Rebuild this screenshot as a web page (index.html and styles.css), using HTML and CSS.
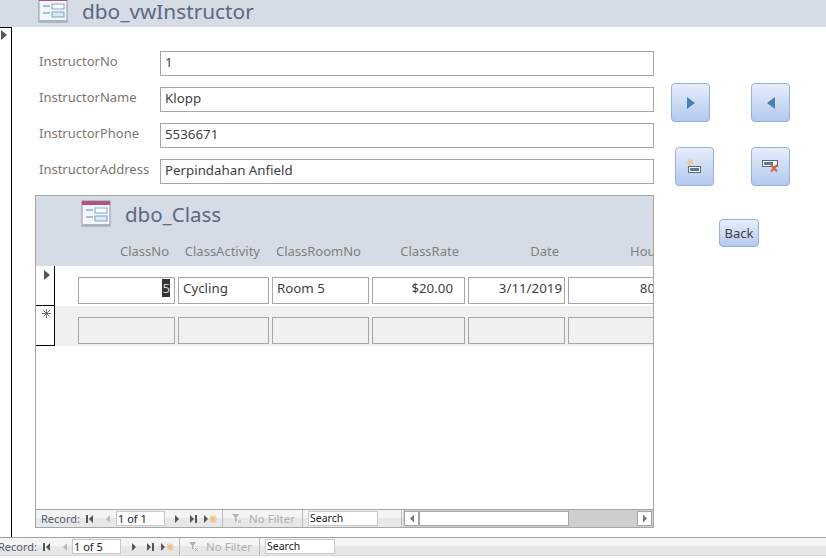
FILE: index.html
```html
<!DOCTYPE html>
<html lang="en">
<head>
    <meta charset="UTF-8">
    <title>dbo_vwInstructor</title>
    <link rel="stylesheet" href="styles.css">
</head>
<body>
    <svg class="defs" width="0" height="0">
        <symbol id="form-top" viewBox="0 0 32 28">
            <rect x="2" y="1" width="28" height="25" fill="#f4f6fa" stroke="#8d97a8"/>
            <rect x="2" y="1" width="28" height="4" fill="#b0557a"/>
            <rect x="3" y="24" width="27" height="2" fill="#a9b3c1"/>
            <rect x="6" y="9" width="7" height="2" fill="#9fc0e0"/>
            <rect x="6" y="16" width="7" height="2" fill="#9fc0e0"/>
            <rect x="15" y="8" width="12" height="5" fill="#fff" stroke="#7fa6cc"/>
            <rect x="15" y="16" width="12" height="5" fill="#dbe8f5" stroke="#7fa6cc"/>
        </symbol>
        <symbol id="nav-first" viewBox="0 0 7 8"><path d="M0 0h2v8H0zM7 0v8L3 4z"/></symbol>
        <symbol id="nav-prev" viewBox="0 0 6 8"><path d="M5 0v8L1 4z"/></symbol>
        <symbol id="nav-next" viewBox="0 0 6 8"><path d="M1 0v8l4-4z"/></symbol>
        <symbol id="nav-last" viewBox="0 0 7 8"><path d="M0 0v8l4-4zM5 0h2v8H5z"/></symbol>
        <symbol id="nav-new" viewBox="0 0 13 8">
            <path d="M0 0v8l4-4z" fill="#555"/>
            <path d="M9 0v8M5 4h8M6 1l6 6M12 1L6 7" stroke="#eebf7e" stroke-width="1.100"/>
        </symbol>
        <symbol id="nav-filter" viewBox="0 0 10 11">
            <path d="M0 1h7L4.500 4.500V9L3 8V4.500z" fill="#b4b4b4"/>
            <path d="M6 7l3 3M9 7l-3 3" stroke="#b4b4b4"/>
        </symbol>
    </svg>

    <header class="title-bar">
        <svg class="form-icon title-icon"><use href="#form-top"/></svg>
        <h1 class="form-title">dbo_vwInstructor</h1>
    </header>

    <div class="main">
        <div class="selector"><span class="arrow"></span></div>

        <div class="form-area">
            <div class="form-left">
                <div class="field-row">
                    <label class="field-label">InstructorNo</label>
                    <div class="field-box">1</div>
                </div>
                <div class="field-row">
                    <label class="field-label">InstructorName</label>
                    <div class="field-box">Klopp</div>
                </div>
                <div class="field-row">
                    <label class="field-label">InstructorPhone</label>
                    <div class="field-box">5536671</div>
                </div>
                <div class="field-row">
                    <label class="field-label">InstructorAddress</label>
                    <div class="field-box">Perpindahan Anfield</div>
                </div>

                <section class="subform">
                    <div class="sub-head">
                        <div class="sub-title">
                            <svg class="form-icon sub-icon"><use href="#form-top"/></svg>
                            <h2 class="sub-name">dbo_Class</h2>
                        </div>
                        <div class="grid-row head-row">
                            <span class="col-a">ClassNo</span>
                            <span class="col-b">ClassActivity</span>
                            <span class="col-c">ClassRoomNo</span>
                            <span class="col-d">ClassRate</span>
                            <span class="col-e">Date</span>
                            <span class="col-f">Hours</span>
                        </div>
                    </div>
                    <div class="sub-records">
                        <div class="record">
                            <div class="rec-sel"><span class="arrow"></span></div>
                            <div class="grid-row cell-row">
                                <div class="cell col-a num"><span class="picked">5</span></div>
                                <div class="cell col-b">Cycling</div>
                                <div class="cell col-c">Room 5</div>
                                <div class="cell col-d num">$20.00</div>
                                <div class="cell col-e num">3/11/2019</div>
                                <div class="cell col-f num">80</div>
                            </div>
                        </div>
                        <div class="record record-new">
                            <div class="rec-sel rec-star">
                                <svg class="star" viewBox="0 0 9 9"><path d="M4.500 0v9M0 4.500h9M1.300 1.300l6.400 6.400M7.700 1.300L1.300 7.700" stroke="#555" stroke-width="0.800"/></svg>
                            </div>
                            <div class="grid-row cell-row">
                                <div class="cell col-a"></div>
                                <div class="cell col-b"></div>
                                <div class="cell col-c"></div>
                                <div class="cell col-d"></div>
                                <div class="cell col-e"></div>
                                <div class="cell col-f"></div>
                            </div>
                        </div>
                    </div>
                    <div class="sub-nav">
                        <div class="nav nav-sub">
                            <span class="nav-label">Record:</span>
                            <svg class="nav-icon i-first"><use href="#nav-first"/></svg>
                            <svg class="nav-icon i-prev"><use href="#nav-prev"/></svg>
                            <span class="nav-input nav-pos">1 of 1</span>
                            <svg class="nav-icon i-next"><use href="#nav-next"/></svg>
                            <svg class="nav-icon i-last"><use href="#nav-last"/></svg>
                            <svg class="nav-icon i-new"><use href="#nav-new"/></svg>
                            <span class="nav-div"></span>
                            <svg class="nav-icon i-filter"><use href="#nav-filter"/></svg>
                            <span class="nav-filter">No Filter</span>
                            <span class="nav-div"></span>
                            <span class="nav-input nav-search">Search</span>
                            <span class="nav-div nav-div-end"></span>
                        </div>
                        <div class="scrollbar">
                            <span class="sb-btn"><svg class="sb-icon"><use href="#nav-prev"/></svg></span>
                            <span class="sb-thumb"></span>
                            <span class="sb-btn"><svg class="sb-icon"><use href="#nav-next"/></svg></span>
                        </div>
                    </div>
                </section>
            </div>

            <div class="buttons">
                <div class="btn-row row-one">
                    <button class="btn btn-icon">
                        <svg width="12" height="14" viewBox="0 0 12 14"><path d="M2 1v12l8-6z" fill="#4a7eb5"/></svg>
                    </button>
                    <button class="btn btn-icon">
                        <svg width="12" height="14" viewBox="0 0 12 14"><path d="M10 1v12L2 7z" fill="#4a7eb5"/></svg>
                    </button>
                </div>
                <div class="btn-row row-two">
                    <button class="btn btn-icon">
                        <svg width="16" height="16" viewBox="0 0 16 16">
                            <path d="M3 0v7M0 3.500h7M1 1l4.500 5M5.500 1L1 6" stroke="#eebf7e"/>
                            <rect x="1.500" y="7.500" width="12" height="6" fill="#fff" stroke="#666"/>
                            <rect x="3" y="9" width="9" height="3" fill="#4a7eb5"/>
                        </svg>
                    </button>
                    <button class="btn btn-icon">
                        <svg width="17" height="13" viewBox="0 0 17 13">
                            <rect x="0.500" y="0.500" width="15" height="6" fill="#fff" stroke="#666"/>
                            <rect x="2" y="2" width="9" height="3" fill="#4a7eb5"/>
                            <path d="M9 5l6 6.500M15 5l-6 6.500" stroke="#dc5f3f" stroke-width="2"/>
                        </svg>
                    </button>
                </div>
                <div class="btn-row row-three">
                    <button class="btn btn-text">Back</button>
                </div>
            </div>
        </div>
    </div>

    <footer class="nav nav-main">
        <span class="nav-label">Record:</span>
        <svg class="nav-icon i-first"><use href="#nav-first"/></svg>
        <svg class="nav-icon i-prev"><use href="#nav-prev"/></svg>
        <span class="nav-input nav-pos">1 of 5</span>
        <svg class="nav-icon i-next"><use href="#nav-next"/></svg>
        <svg class="nav-icon i-last"><use href="#nav-last"/></svg>
        <svg class="nav-icon i-new"><use href="#nav-new"/></svg>
        <span class="nav-div"></span>
        <svg class="nav-icon i-filter"><use href="#nav-filter"/></svg>
        <span class="nav-filter">No Filter</span>
        <span class="nav-div"></span>
        <span class="nav-input nav-search">Search</span>
    </footer>
</body>
</html>
```

FILE: styles.css
```css
* {
    box-sizing: border-box;
}
html, body {
    height: 558px;
    overflow: hidden;
}
body {
    margin: 0;
    background-color: #fff;
    font-family: "Noto Sans", Arial, sans-serif;
    font-size: 13px;
    color: #3f3f3f;
}
.defs {
    display: block;
    height: 0;
}

/* title */
.title-bar {
    height: 27px;
    background-color: #d5dce6;
    display: flex;
    align-items: flex-end;
    overflow: hidden;
}
.form-icon {
    display: block;
    flex: none;
}
.title-icon {
    width: 32px;
    height: 28px;
    margin: 0 0 3px 37px;
}
.form-title {
    margin: 0 0 4px 13px;
    font-size: 20.8px;
    line-height: 23px;
    font-weight: normal;
    color: #5a6a80;
}

/* main form */
.main {
    height: 510px;
    display: flex;
}
.selector {
    width: 12px;
    flex: none;
    border-right: 1px solid #000;
    border-top: 1px solid #000;
    padding: 2px 0 0 1px;
}
.arrow {
    display: block;
    width: 0;
    height: 0;
    border-left: 6px solid #555;
    border-top: 5.5px solid transparent;
    border-bottom: 5.5px solid transparent;
}
.form-area {
    flex: 1;
    display: flex;
}
.form-left {
    width: 642px;
    flex: none;
    padding: 24px 0 0 23px;
}
.field-row {
    display: flex;
    height: 25px;
    margin: 0 0 11px 4px;
}
.field-label {
    width: 121px;
    flex: none;
    color: #80756f;
    line-height: 21px;
}
.field-box {
    flex: 1;
    border: 1px solid #a6a6a6;
    padding: 0 4px;
    font-size: 13.3px;
    line-height: 21px;
}

/* subform */
.subform {
    width: 619px;
    height: 333px;
    border: 1px solid #a6a6a6;
    display: flex;
    flex-direction: column;
    overflow: hidden;
}
.sub-head {
    height: 70px;
    flex: none;
    background-color: #d5dce6;
}
.sub-title {
    height: 45px;
    display: flex;
    padding: 4px 0 0 44px;
}
.sub-icon {
    width: 32px;
    height: 28px;
}
.sub-name {
    margin: 0 0 0 13px;
    font-size: 20.5px;
    line-height: 28px;
    font-weight: normal;
    color: #5a6a80;
}
.grid-row {
    display: grid;
    grid-template-columns: 97px 91px 97px 93px 97px 92px;
    column-gap: 3px;
}
.head-row {
    padding-left: 42px;
    color: #80807f;
    line-height: 20px;
    white-space: nowrap;
}
.head-row span {
    text-align: right;
    padding-right: 6px;
}
.head-row .col-b {
    padding-right: 9px;
}
.head-row .col-c {
    padding-right: 8px;
}
.head-row .col-f {
    text-align: left;
    padding: 0 0 0 62px;
}
.sub-records {
    flex: 1;
}
.record {
    height: 40px;
    display: flex;
}
.record-new {
    background-color: #f0f0f0;
}
.rec-sel {
    width: 19px;
    flex: none;
    background-color: #fff;
    border-right: 1px solid #000;
    border-bottom: 1px solid #000;
    padding: 4px 0 0 8px;
}
.rec-star {
    padding: 3px 0 0 6px;
}
.star {
    display: block;
    width: 9px;
    height: 9px;
}
.record .cell-row {
    padding: 11px 0 0 23px;
}
.cell {
    height: 27px;
    border: 1px solid #a6a6a6;
    padding: 0 4px;
    font-size: 13.3px;
    line-height: 21px;
}
.num {
    text-align: right;
}
.cell.col-d {
    padding-right: 11px;
}
.cell.col-e {
    padding-right: 2px;
}
.picked {
    background-color: #333;
    color: #cfcfcf;
}

/* record navigation */
.sub-nav {
    height: 18px;
    flex: none;
    display: flex;
    border-top: 1px solid #a6a6a6;
}
.nav {
    display: flex;
    align-items: center;
    font-size: 11px;
    background: linear-gradient(#f3f4f6 50%, #e6e7ea 50%);
}
.nav-sub {
    width: 367px;
    flex: none;
    padding-left: 5px;
}
.nav-main {
    height: 19px;
    border-top: 1px solid #a0a0a0;
    border-bottom: 1px solid #d8d8d8;
    margin-bottom: 2px;
    padding-left: 0;
    overflow: hidden;
}
.nav-main .nav-label {
    margin-left: -2px;
}
.nav-label {
    width: 39px;
    flex: none;
    color: #555e6b;
    white-space: nowrap;
}
.nav-icon {
    display: block;
    height: 8px;
    flex: none;
    fill: #555;
}
.i-first {
    width: 7px;
    margin-left: 6px;
}
.i-prev {
    width: 6px;
    margin-left: 12px;
    fill: #bbb;
}
.nav-input {
    height: 15px;
    flex: none;
    background-color: #fff;
    border: 1px solid #c8c8c8;
    padding-left: 1px;
    line-height: 13px;
    color: #222;
}
.nav-pos {
    width: 49px;
    margin-left: 5px;
}
.nav-main .nav-pos {
    margin-left: 4px;
}
.i-next {
    width: 6px;
    margin-left: 9px;
}
.nav-main .i-next {
    margin-left: 10px;
}
.i-last {
    width: 7px;
    margin-left: 10px;
}
.i-new {
    width: 13px;
    margin-left: 7px;
}
.nav-div {
    width: 1px;
    height: 100%;
    flex: none;
    background-color: #bdbdbd;
    margin-left: 5px;
}
.i-filter {
    width: 10px;
    height: 11px;
    margin-left: 9px;
}
.nav-filter {
    width: 44px;
    flex: none;
    margin-left: 7px;
    font-size: 11.5px;
    color: #b0b0b0;
    white-space: nowrap;
}
.nav-filter + .nav-div {
    margin-left: 9px;
}
.nav-search {
    width: 70px;
    margin-left: 5px;
    font-size: 10.5px;
}
.nav-div-end {
    margin-left: 23px;
}

.scrollbar {
    flex: 1;
    display: flex;
    background-color: #cfcfcf;
    padding: 1px;
    justify-content: flex-start;
}
.sb-btn {
    width: 15px;
    flex: none;
    background-color: #fff;
    border: 1px solid #a6a6a6;
    display: flex;
    align-items: center;
    justify-content: center;
}
.sb-btn:last-child {
    margin-left: auto;
}
.sb-icon {
    width: 6px;
    height: 9px;
    fill: #777;
}
.sb-thumb {
    width: 150px;
    flex: none;
    background-color: #fff;
    border: 1px solid #a6a6a6;
}

/* buttons */
.buttons {
    flex: 1;
}
.btn {
    display: flex;
    align-items: center;
    justify-content: center;
    flex: none;
    padding: 0;
    border: 1px solid #9aafd8;
    border-radius: 4px;
    background: linear-gradient(#e6eefb, #b4c9ef);
}
.btn-icon {
    width: 39px;
    height: 39px;
}
.btn-text {
    width: 40px;
    height: 28px;
    font-family: inherit;
    font-size: 13px;
    color: #3f3f3f;
}
.btn-row {
    display: flex;
}
.row-one {
    margin-top: 56px;
    padding-left: 17px;
    gap: 41px;
}
.row-two {
    margin-top: 25px;
    padding-left: 21px;
    gap: 37px;
}
.row-three {
    margin-top: 33px;
    padding-left: 65px;
}
```
